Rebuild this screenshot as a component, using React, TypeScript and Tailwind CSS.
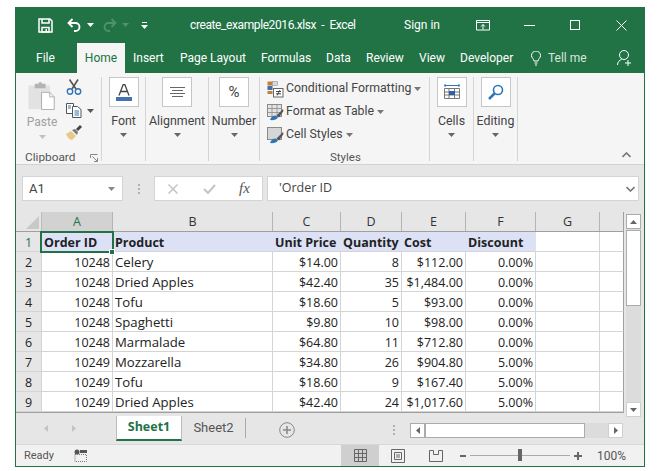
import React from 'react';

const rows = [
  ['2', '10248', 'Celery', '$14.00', '8', '$112.00', '0.00%'],
  ['3', '10248', 'Dried Apples', '$42.40', '35', '$1,484.00', '0.00%'],
  ['4', '10248', 'Tofu', '$18.60', '5', '$93.00', '0.00%'],
  ['5', '10248', 'Spaghetti', '$9.80', '10', '$98.00', '0.00%'],
  ['6', '10248', 'Marmalade', '$64.80', '11', '$712.80', '0.00%'],
  ['7', '10249', 'Mozzarella', '$34.80', '26', '$904.80', '5.00%'],
  ['8', '10249', 'Tofu', '$18.60', '9', '$167.40', '5.00%'],
  ['9', '10249', 'Dried Apples', '$42.40', '24', '$1,017.60', '5.00%'],
];

const colsClass = 'grid grid-cols-[26px_71px_160px_68px_61px_64px_70px_64px_24px]';
const cell = "h-5 border-r border-b border-[#d4d4d4] px-[2px] text-[12.5px] leading-[21px] whitespace-nowrap overflow-hidden font-['Open_Sans',sans-serif]";

const Caret = ({ color = '#666' }: { color?: string }) => (
  <svg width="7" height="4" viewBox="0 0 7 4"><path d="M0 0h7L3.5 4z" fill={color} /></svg>
);

const BigButton = ({ children }: { children: React.ReactNode }) => (
  <div className="w-[30px] h-[30px] border border-[#c6c6c6] bg-white flex items-center justify-center">{children}</div>
);

const Collapsed = ({ w, label, icon }: { w: string; label: string; icon: React.ReactNode }) => (
  <div className={`${w} h-[84px] border-r border-[#d4d4d4] flex flex-col items-center`}>
    <BigButton>{icon}</BigButton>
    <div className="mt-[5px] text-[12.4px] leading-[18px] text-[#444] whitespace-nowrap">{label}</div>
    <div className="mt-[3px] flex"><Caret /></div>
  </div>
);

const StyleIcon = ({ kind }: { kind: number }) => (
  <svg className="mt-px shrink-0" width="17" height="17" viewBox="0 0 17 17">
    {kind === 0 ? (
      <g>
        <rect x="0.5" y="0.5" width="5" height="4" fill="#c0803a" />
        <rect x="5.5" y="0.5" width="5" height="4" fill="#d8d8d8" stroke="#888" strokeWidth="0.5" />
        <rect x="0.5" y="5" width="5" height="4" fill="#3f6fa8" />
        <rect x="0.5" y="10" width="5" height="3" fill="#c0803a" />
        <rect x="6.5" y="7.5" width="9.5" height="8.5" fill="#fff" stroke="#666" />
        <path d="M9 10.5h5M9 12.8h5M12.8 9.2l-2.6 5.2" stroke="#444" />
      </g>
    ) : (
      <g>
        <rect x="0.5" y="0.5" width="14" height="12" fill={kind === 1 ? '#e4e4e4' : '#d6d6d6'} stroke="#8a8a8a" />
        {kind === 1 && <path d="M5 1v11M10 1v11M1 4.5h13M1 8.5h13" stroke="#9a9a9a" />}
        <path d="M16 5L9.5 11.5l2.5 2L16.5 7z" fill="#555" />
        <path d="M3 16c1-3 3-4.5 5.5-4.5l2.5 2c-1 2-4.5 3-8 2.5z" fill="#2e75b6" />
      </g>
    )}
  </svg>
);

const StyleRow = ({ kind, label }: { kind: number; label: string }) => (
  <div className="h-[23px] flex items-center text-[12.3px] text-[#444] whitespace-nowrap">
    <StyleIcon kind={kind} />
    <span className="ml-[2px] -mt-px">{label}</span>
    <span className="ml-[3px] flex"><Caret color="#777" /></span>
  </div>
);

const App: React.FC = () => {
  return (
    <div className="w-[658px] h-[471px] bg-white pt-[7px] pl-[15px] overflow-hidden font-['Roboto',sans-serif]">
      <div className="w-[630px] h-[460px] border-x border-b border-[#217346] flex flex-col bg-[#e6e6e6]">
        {/* title bar */}
        <div className="h-9 bg-[#217346] flex items-center text-white text-[12px] shrink-0">
          <svg className="ml-[22px]" width="15" height="15" viewBox="0 0 15 15" fill="none" stroke="#fff" strokeWidth="1.5">
            <path d="M1 1h11l2 2v11H1z" />
            <path d="M4 1v4h7V1" />
            <rect x="4" y="9.5" width="7" height="4.5" />
            <rect x="7.5" y="11" width="1.5" height="2.5" fill="#fff" stroke="none" />
          </svg>
          <svg className="ml-[14px]" width="15" height="14" viewBox="0 0 15 14" fill="none" stroke="#fff" strokeWidth="1.8">
            <path d="M5.5 1L1.5 5l4 4" />
            <path d="M2 5h6.5a4 4 0 0 1 0 8H7" />
          </svg>
          <span className="ml-[5px] flex"><Caret color="#fff" /></span>
          <svg className="ml-[8px]" width="15" height="14" viewBox="0 0 15 14" fill="none" stroke="#4f9170" strokeWidth="1.8">
            <path d="M9.5 1l4 4-4 4" />
            <path d="M13 5H6.5a4 4 0 0 0 0 8H8" />
          </svg>
          <span className="ml-[5px] flex"><Caret color="#4f9170" /></span>
          <svg className="ml-[12px]" width="7" height="8" viewBox="0 0 7 8"><path d="M1 1h5V2H1zM0 4h7L3.5 8z" fill="#fff" /></svg>
          <span className="ml-[42px] w-[214px] whitespace-nowrap tracking-[-0.4px]">create_example2016.xlsx&nbsp; -&nbsp; Excel</span>
          <span className="w-[72px] whitespace-nowrap">Sign in</span>
          <svg width="15" height="11" viewBox="0 0 15 11" fill="none" stroke="#fff">
            <path d="M0.5 0.5h13v9.5h-13zM0.5 2.5h13M7 9.5V4.5M5 6.5l2-2 2 2" />
          </svg>
          <span className="ml-[33px] w-[11px] h-px bg-white" />
          <span className="ml-[35px] w-[10px] h-[10px] border border-white" />
          <svg className="ml-[36px]" width="11" height="11" viewBox="0 0 11 11" stroke="#fff"><path d="M0.5 0.5l10 10M10.5 0.5l-10 10" /></svg>
        </div>
        {/* tabs */}
        <div className="h-[30px] bg-[#217346] flex text-white text-[12px] leading-[30px] shrink-0 whitespace-nowrap">
          <span className="ml-[20px] w-[41px]">File</span>
          <span className="w-12 h-[30px] bg-[#f5f5f5] text-[#217346] text-center">Home</span>
          <span className="ml-2 w-[47px]">Insert</span>
          <span className="w-[81px]">Page Layout</span>
          <span className="w-[65px]">Formulas</span>
          <span className="w-10">Data</span>
          <span className="w-[53px]">Review</span>
          <span className="w-[41px]">View</span>
          <span className="w-[71px]">Developer</span>
          <svg className="mt-[8px]" width="10" height="15" viewBox="0 0 10 15" fill="none" stroke="#fff">
            <path d="M3 10c0-2-2.5-3-2.5-5.5a4.5 4.5 0 0 1 9 0C9.5 7 7 8 7 10zM3.5 12h3M4 14h2" />
          </svg>
          <span className="ml-[7px] w-[69px] text-[#d8e6de]">Tell me</span>
          <svg className="mt-[7px]" width="16" height="16" viewBox="0 0 16 16" fill="none" stroke="#fff">
            <circle cx="7" cy="5" r="4.5" />
            <path d="M0.5 15c0-3 2-5 4-5.5M8 13h6M11 10v6" />
          </svg>
        </div>
        {/* ribbon */}
        <div className="relative h-[92px] bg-[#f5f5f5] border-b border-[#d2d2d2] flex pt-1 shrink-0">
          <div className="w-[86px] h-[84px] border-r border-[#d4d4d4] flex relative">
            <div className="w-12 ml-[2px] flex flex-col items-center">
              <svg className="mt-[4px]" width="28" height="29" viewBox="0 0 30 32">
                <path d="M0 5h24v26H0z" fill="#e2e2e2" />
                <path d="M7 3h4a2 2 0 0 1 4 0h4v5H7z" fill="#b4b4b4" />
                <path d="M14.5 12.5h9l5 5v14h-14z" fill="#fff" stroke="#a8a8a8" />
                <path d="M23.5 12.5v5h5" fill="none" stroke="#a8a8a8" />
              </svg>
              <span className="mt-[3px] text-[12px] leading-[18px] text-[#a0a0a0]">Paste</span>
              <span className="mt-[4px] flex"><Caret color="#c0c0c0" /></span>
            </div>
            <div className="flex flex-col">
              <svg className="mt-[2px]" width="16" height="16" viewBox="0 0 16 16" fill="none">
                <path d="M3.5 0.5L10 10M12 0.5L6 10" stroke="#555" strokeWidth="1.6" />
                <circle cx="4" cy="12.5" r="2.7" stroke="#2e75b6" strokeWidth="1.4" />
                <circle cx="12" cy="12.5" r="2.7" stroke="#2e75b6" strokeWidth="1.4" />
              </svg>
              <div className="mt-[8px] flex items-center">
                <svg width="16" height="15" viewBox="0 0 16 15" fill="none" stroke="#555">
                  <path d="M0.5 0.5h7v10h-7z" fill="#fff" />
                  <path d="M6.5 3.5h5l3.5 3v8h-8.5z" fill="#fff" />
                  <path d="M8.5 8h4.5M8.5 10h4.5M8.5 12h4.5" stroke="#2e75b6" />
                  <path d="M2 3h3M2 5h3" stroke="#2e75b6" />
                </svg>
                <span className="ml-[5px] flex"><Caret color="#555" /></span>
              </div>
              <svg className="mt-[7px]" width="17" height="15" viewBox="0 0 17 15">
                <path d="M0 9l5-3 5 5-4 4c-2 0-5-3-6-6z" fill="#e8c987" />
                <path d="M6 5l3-1 3 3-1 3z" fill="#777" />
                <path d="M10 4l4-4 2 2-4 4z" fill="#444" />
              </svg>
            </div>
            <span className="absolute left-[9px] bottom-[-5px] text-[11.8px] leading-[18px] text-[#555]">Clipboard</span>
            <svg className="absolute right-[3px] bottom-[-1px]" width="8" height="8" viewBox="0 0 8 8" fill="none" stroke="#888"><path d="M0.5 4V0.5H7.5M2.5 2.5L7 7M7.5 4v3.5H4" /></svg>
          </div>
          <Collapsed w="w-[44px]" label="Font" icon={
            <svg width="16" height="17" viewBox="0 0 16 17"><path d="M3 11.5L7.2 0.5h1.6L13 11.5M5 7.5h6" fill="none" stroke="#444" strokeWidth="1.3" /><rect x="0" y="13" width="16" height="4" fill="#4472b0" /></svg>
          } />
          <Collapsed w="w-[63px]" label="Alignment" icon={
            <svg width="15" height="10" viewBox="0 0 15 10" stroke="#666"><path d="M0 0.5h15M2 3.5h11M0 6.5h15M2 9.5h11" /></svg>
          } />
          <Collapsed w="w-[51px]" label="Number" icon={<span className="text-[15px] text-[#444]">%</span>} />
          <div className="w-[170px] h-[84px] border-r border-[#d4d4d4] pl-[7px] flex flex-col relative">
            <StyleRow kind={0} label="Conditional Formatting" />
            <StyleRow kind={1} label="Format as Table" />
            <StyleRow kind={2} label="Cell Styles" />
            <span className="absolute left-[70px] bottom-[-5px] text-[11.5px] leading-[18px] text-[#555]">Styles</span>
          </div>
          <Collapsed w="w-[44px]" label="Cells" icon={
            <svg width="16" height="16" viewBox="0 0 16 16" fill="none">
              <path d="M0.5 1.5h15M1 0v3M15 0v3" stroke="#2e75b6" />
              <path d="M0.5 4.5h15v10h-15zM0.5 8h15M0.5 11h15M5 4.5v10M10.5 4.5v10" stroke="#777" />
              <rect x="5" y="7" width="6" height="4" fill="#2e5fa8" />
            </svg>
          } />
          <Collapsed w="w-[44px]" label="Editing" icon={
            <svg width="16" height="16" viewBox="0 0 16 16" fill="none">
              <circle cx="10" cy="6" r="4.5" stroke="#2e75b6" strokeWidth="1.6" />
              <path d="M6.5 9.5L1 15" stroke="#2e75b6" strokeWidth="2.5" />
            </svg>
          } />
          <svg className="absolute right-[13px] bottom-[6px]" width="9" height="6" viewBox="0 0 9 6" fill="none" stroke="#777" strokeWidth="1.6"><path d="M0.5 5L4.5 1l4 4" /></svg>
        </div>
        {/* formula bar */}
        <div className="h-[47px] flex pt-[11px] pl-[6px] shrink-0 text-[13px] text-[#444]">
          <div className="w-[101px] h-[25px] bg-white border border-[#d4d4d4] flex items-center justify-between pl-[6px] pr-[7px]">
            <span>A1</span><Caret color="#888" />
          </div>
          <div className="w-[31px] h-[25px] flex flex-col items-center justify-center gap-[2px]">
            <i className="w-[2px] h-[2px] bg-[#b0b0b0]" /><i className="w-[2px] h-[2px] bg-[#b0b0b0]" /><i className="w-[2px] h-[2px] bg-[#b0b0b0]" />
          </div>
          <div className="w-[109px] h-[25px] bg-white border border-[#d4d4d4] flex items-center pl-[13px]">
            <svg width="10" height="10" viewBox="0 0 10 10" stroke="#c4c4c4" strokeWidth="1.5"><path d="M0.5 0.5l9 9M9.5 0.5l-9 9" /></svg>
            <svg className="ml-[25px]" width="13" height="10" viewBox="0 0 13 10" fill="none" stroke="#c4c4c4" strokeWidth="2"><path d="M1 5l4 4 7-8" /></svg>
            <span className="ml-[23px] font-['Liberation_Serif',serif] italic text-[15px] leading-none text-[#555]">fx</span>
          </div>
          <div className="ml-[4px] w-[372px] h-[25px] bg-white border border-[#d4d4d4] flex items-center justify-between pl-[11px] pr-[3px]">
            <span className="font-['Open_Sans',sans-serif] text-[12.5px]">'Order ID</span>
            <svg width="9" height="6" viewBox="0 0 9 6" fill="none" stroke="#777" strokeWidth="1.6"><path d="M0.5 1l4 4 4-4" /></svg>
          </div>
        </div>
        {/* sheet */}
        <div className="h-[201px] flex shrink-0 text-[#222]">
          <div className="w-[608px]">
            <div className={`${colsClass} h-5 text-[12.5px] leading-[19px] text-center text-[#333] border-b border-[#9f9f9f] font-['Open_Sans',sans-serif]`}>
              <div className="border-r border-[#bbb] flex items-end justify-end pr-[2px] pb-[2px]">
                <svg width="13" height="13" viewBox="0 0 13 13"><path d="M13 0v13H0z" fill="#c8c8c8" /></svg>
              </div>
              <div className="bg-[#d2d2d2] border-r border-[#b4b4b4] text-[#217346]">A</div>
              {['B', 'C', 'D', 'E', 'F', 'G'].map((c) => (
                <div key={c} className="border-r border-[#b4b4b4]">{c}</div>
              ))}
              <div className="border-r border-[#9f9f9f]" />
            </div>
            <div className={`${colsClass} relative bg-white font-bold`}>
              <div className={`${cell} bg-[#e6e6e6] border-[#c8c8c8] text-center font-normal text-[#217346]`}>1</div>
              {['Order ID', 'Product', 'Unit Price', 'Quantity', 'Cost', 'Discount'].map((h) => (
                <div key={h} className={`${cell} bg-[#dce1f5] border-r-[#dce1f5]`}>{h}</div>
              ))}
              <div className={cell} />
              <div className={`${cell} border-r-[#9f9f9f]`} />
              <div className="absolute left-[24px] top-[-1px] w-[74px] h-[22px] border-2 border-[#217346]" />
              <div className="absolute left-[93px] top-[17px] w-[4px] h-[4px] bg-[#217346] border border-white box-content" />
            </div>
            {rows.map((r) => (
              <div key={r[0]} className={`${colsClass} bg-white`}>
                <div className={`${cell} bg-[#e6e6e6] border-[#c8c8c8] text-center`}>{r[0]}</div>
                <div className={`${cell} text-right`}>{r[1]}</div>
                <div className={`${cell} text-[13.2px]`}>{r[2]}</div>
                <div className={`${cell} text-right`}>{r[3]}</div>
                <div className={`${cell} text-right`}>{r[4]}</div>
                <div className={`${cell} text-right`}>{r[5]}</div>
                <div className={`${cell} text-right`}>{r[6]}</div>
                <div className={cell} />
                <div className={`${cell} border-r-[#9f9f9f]`} />
              </div>
            ))}
            <div className={`${colsClass} h-[1px] bg-[#9f9f9f]`} />
          </div>
          <div className="ml-[2px] mt-[2px] w-[15px] h-[203px] shrink-0 bg-[#dcdcdc] flex flex-col">
            <div className="h-[15px] bg-white border border-[#ababab] flex items-center justify-center"><svg width="7" height="4" viewBox="0 0 7 4"><path d="M0 4h7L3.5 0z" fill="#666" /></svg></div>
            <div className="mt-px h-[76px] bg-white border border-[#ababab]" />
            <div className="mt-auto h-[15px] bg-white border border-[#d0d0d0] flex items-center justify-center"><Caret /></div>
          </div>
        </div>
        {/* sheet tabs */}
        <div className="h-[31px] flex shrink-0 text-[13px]">
          <div className="w-[100px] flex items-center pl-[28px] gap-[24px]">
            <svg width="4" height="7" viewBox="0 0 4 7"><path d="M4 0v7L0 3.5z" fill="#c4c4c4" /></svg>
            <svg width="4" height="7" viewBox="0 0 4 7"><path d="M0 0v7l4-3.5z" fill="#c4c4c4" /></svg>
          </div>
          <div className="w-[66px] h-[25px] mt-[3px] bg-white border-l border-r border-[#bcbcbc] border-b-2 border-b-[#217346] text-center font-bold text-[#217346] leading-[22px] font-['Open_Sans',sans-serif] text-[12.5px]">Sheet1</div>
          <div className="w-[64px] h-[20px] mt-[5px] border-r border-[#aaa] text-center text-[#555] leading-[19px]">Sheet2</div>
          <svg className="ml-[33px] mt-[9px]" width="16" height="16" viewBox="0 0 16 16" fill="none" stroke="#888"><circle cx="8" cy="8" r="7.3" /><path d="M8 4v8M4 8h8" strokeWidth="1.5" /></svg>
          <div className="ml-[98px] mt-[12px] flex flex-col gap-[2px]">
            <i className="w-[2px] h-[2px] bg-[#b0b0b0]" /><i className="w-[2px] h-[2px] bg-[#b0b0b0]" /><i className="w-[2px] h-[2px] bg-[#b0b0b0]" />
          </div>
          <div className="ml-[15px] mt-[10px] w-[213px] h-[15px] bg-[#dcdcdc] flex">
            <div className="w-[15px] h-[15px] bg-white border border-[#ababab] flex items-center justify-center"><svg width="4" height="7" viewBox="0 0 4 7"><path d="M4 0v7L0 3.5z" fill="#666" /></svg></div>
            <div className="w-[160px] h-[15px] bg-white border border-[#ababab]" />
            <div className="ml-auto w-[15px] h-[15px] bg-white border border-[#d0d0d0] flex items-center justify-center"><svg width="4" height="7" viewBox="0 0 4 7"><path d="M0 0v7l4-3.5z" fill="#666" /></svg></div>
          </div>
        </div>
        {/* status bar */}
        <div className="flex-1 bg-[#f1f1f1] flex items-center text-[12px] text-[#555] border-t border-[#d8d8d8]">
          <span className="ml-[8px] w-[50px] text-[11px] pt-px">Ready</span>
          <svg width="13" height="13" viewBox="0 0 13 13"><circle cx="3" cy="3" r="2.5" fill="#555" /><rect x="6" y="1" width="7" height="3" fill="#555" /><rect x="1" y="5.5" width="11.5" height="7" fill="none" stroke="#777" strokeDasharray="1 1" /></svg>
          <div className="ml-[254px] w-[38px] h-[21px] bg-[#cfcfcf] flex items-center justify-center">
            <svg width="13" height="13" viewBox="0 0 13 13" fill="none" stroke="#666"><path d="M0.5 0.5h12v12h-12zM4.5 0.5v12M8.5 0.5v12M0.5 4.5h12M0.5 8.5h12" /></svg>
          </div>
          <svg className="ml-[12px]" width="14" height="14" viewBox="0 0 14 14" fill="none" stroke="#666"><path d="M0.5 0.5h13v13h-13zM3.5 3.5h7v7h-7zM5 6h4M5 8h4" /></svg>
          <svg className="ml-[24px]" width="14" height="12" viewBox="0 0 14 12" fill="none" stroke="#666"><path d="M0.5 0.5v11h13v-11M0.5 0.5h4v4h5v-4h4" /></svg>
          <span className="ml-[17px] w-[6px] h-[2px] bg-[#666]" />
          <div className="ml-[4px] w-[100px] h-px bg-[#aaa] relative">
            <span className="absolute left-[48px] top-[-6px] w-[4px] h-[12px] bg-[#666]" />
          </div>
          <svg className="ml-[4px]" width="8" height="8" viewBox="0 0 8 8" stroke="#666" strokeWidth="2"><path d="M0 4h8M4 0v8" /></svg>
          <span className="ml-[15px]">100%</span>
        </div>
      </div>
    </div>
  );
};

export default App;
